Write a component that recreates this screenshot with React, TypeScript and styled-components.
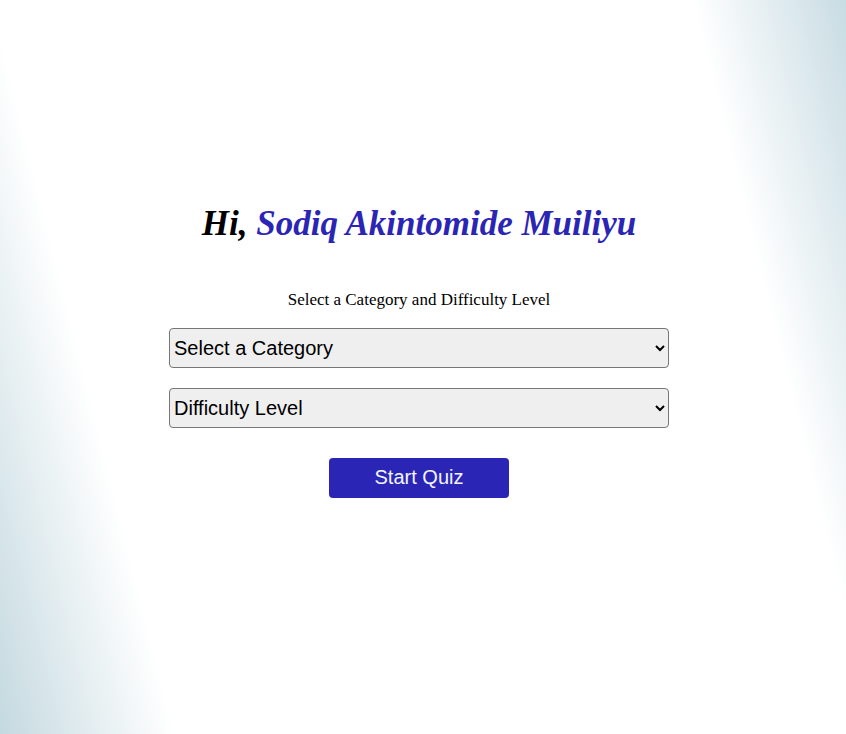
import React from "react";
import styled, { createGlobalStyle } from "styled-components";

const GlobalStyle = createGlobalStyle`
  html, body {
    margin: 0;
    padding: 0;
  }
  body {
    font-family: "Liberation Serif", serif;
  }
`;

const Page = styled.div`
  min-height: 734px;
  box-sizing: border-box;
  padding: 0 8px 0 0;
  background: linear-gradient(76deg, #c4d9e0 0%, #ffffff 17%, #ffffff 85%, #c8dce3 100%);
  display: flex;
  flex-direction: column;
  align-items: center;
`;

const Greeting = styled.h1`
  margin: 202px 0 0;
  font-family: "Liberation Serif", serif;
  font-style: italic;
  font-weight: bold;
  font-size: 35px;
  line-height: 44px;
  color: #000;
`;

const Name = styled.span`
  color: #2b25b5;
`;

const Subtitle = styled.p`
  margin: 44px 0 0;
  font-family: "Liberation Serif", serif;
  font-size: 17px;
  line-height: 20px;
  color: #000;
`;

const Form = styled.form`
  margin-top: 18px;
  display: flex;
  flex-direction: column;
  align-items: center;
  gap: 20px;
`;

const Select = styled.select`
  width: 500px;
  height: 40px;
  box-sizing: border-box;
  padding: 0;
  font-family: "Liberation Sans", Arial, sans-serif;
  font-size: 20px;
  color: #000;
  background-color: #efefef;
  border: 1px solid #767676;
  border-radius: 4px;
`;

const StartButton = styled.button`
  margin-top: 10px;
  width: 180px;
  height: 40px;
  box-sizing: border-box;
  border: none;
  border-radius: 4px;
  background: #2b25b5;
  color: #f4f4ff;
  font-family: "Liberation Sans", Arial, sans-serif;
  font-size: 20px;
  line-height: 24px;
  padding: 0 0 3px;
  cursor: pointer;
`;

export default function App() {
  return (
    <>
      <GlobalStyle />
      <Page>
        <Greeting>
          Hi, <Name>Sodiq Akintomide Muiliyu</Name>
        </Greeting>
        <Subtitle>Select a Category and Difficulty Level</Subtitle>
        <Form onSubmit={(e) => e.preventDefault()}>
          <Select defaultValue="">
            <option value="">Select a Category</option>
            <option value="general">General Knowledge</option>
            <option value="science">Science</option>
            <option value="history">History</option>
          </Select>
          <Select defaultValue="">
            <option value="">Difficulty Level</option>
            <option value="easy">Easy</option>
            <option value="medium">Medium</option>
            <option value="hard">Hard</option>
          </Select>
          <StartButton type="submit">Start Quiz</StartButton>
        </Form>
      </Page>
    </>
  );
}
